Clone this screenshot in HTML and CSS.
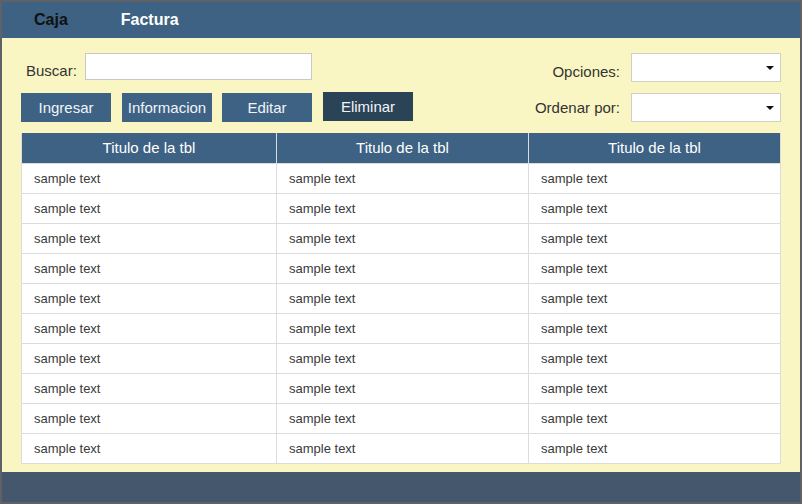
FILE: index.html
```html
<!DOCTYPE html>
<html lang="es">
<head>
<meta charset="utf-8">
<title>Caja</title>
<link rel="stylesheet" href="styles.css">
</head>
<body>
<div class="frame">
  <nav class="nav">
    <span class="nav-item active">Caja</span>
    <span class="nav-item">Factura</span>
  </nav>
  <main class="main">
    <div class="row row-top">
      <div class="group">
        <label class="label label-low">Buscar:</label>
        <div class="input"></div>
      </div>
      <div class="group">
        <label class="label label-low">Opciones:</label>
        <div class="select"><span class="caret"></span></div>
      </div>
    </div>
    <div class="row row-bottom">
      <div class="buttons">
        <button class="btn">Ingresar</button>
        <button class="btn">Informacion</button>
        <button class="btn">Editar</button>
        <button class="btn btn-active">Eliminar</button>
      </div>
      <div class="group">
        <label class="label">Ordenar por:</label>
        <div class="select"><span class="caret"></span></div>
      </div>
    </div>
    <table class="tbl">
      <colgroup><col class="c1"><col class="c2"><col></colgroup>
      <thead>
        <tr><th>Titulo de la tbl</th><th>Titulo de la tbl</th><th>Titulo de la tbl</th></tr>
      </thead>
      <tbody>
        <tr><td>sample text</td><td>sample text</td><td>sample text</td></tr>
        <tr><td>sample text</td><td>sample text</td><td>sample text</td></tr>
        <tr><td>sample text</td><td>sample text</td><td>sample text</td></tr>
        <tr><td>sample text</td><td>sample text</td><td>sample text</td></tr>
        <tr><td>sample text</td><td>sample text</td><td>sample text</td></tr>
        <tr><td>sample text</td><td>sample text</td><td>sample text</td></tr>
        <tr><td>sample text</td><td>sample text</td><td>sample text</td></tr>
        <tr><td>sample text</td><td>sample text</td><td>sample text</td></tr>
        <tr><td>sample text</td><td>sample text</td><td>sample text</td></tr>
        <tr><td>sample text</td><td>sample text</td><td>sample text</td></tr>
      </tbody>
    </table>
  </main>
  <footer class="footer"></footer>
</div>
</body>
</html>
```

FILE: styles.css
```css
* { box-sizing: border-box; }
html, body { margin: 0; padding: 0; }
body {
  font-family: "Liberation Sans", Arial, sans-serif;
  width: 802px;
  height: 504px;
  overflow: hidden;
}
.frame {
  width: 802px;
  height: 504px;
  border: 2px solid #5e6266;
  display: flex;
  flex-direction: column;
}
.nav {
  height: 36px;
  background: #3d6283;
  display: flex;
  align-items: center;
  padding-left: 32px;
  gap: 53px;
}
.nav-item {
  font-size: 16px;
  font-weight: bold;
  color: #ffffff;
}
.nav-item.active { color: #111111; }
.main {
  flex: 1;
  background: #faf6c3;
  padding: 15px 19px 0 19px;
}
.row {
  display: flex;
  justify-content: space-between;
  align-items: center;
  height: 29px;
}
.row-bottom { margin-top: 11px; }
.group {
  display: flex;
  align-items: center;
}
.row-top .group:first-child { padding-left: 5px; align-self: flex-start; }
.label {
  font-size: 15px;
  color: #333333;
  margin-right: 11px;
}
.label-low { margin-top: 7px; }
.row-top .group:first-child .label { margin-right: 8px; }
.input {
  width: 227px;
  height: 27px;
  background: #ffffff;
  border: 1px solid #c9c9c3;
}
.select {
  position: relative;
  width: 150px;
  height: 29px;
  background: #ffffff;
  border: 1px solid #cfcfc8;
}
.caret {
  position: absolute;
  right: 6px;
  top: 12px;
  width: 0;
  height: 0;
  border-left: 4px solid transparent;
  border-right: 4px solid transparent;
  border-top: 4px solid #111111;
}
.buttons {
  display: flex;
  gap: 11px;
  height: 29px;
}
.btn {
  width: 90px;
  height: 29px;
  border: 0;
  padding: 0;
  background: #3d6283;
  color: #f2f4f8;
  font-family: "Liberation Sans", Arial, sans-serif;
  font-size: 15px;
}
.btn:nth-child(3) { margin-left: -1px; }
.btn-active {
  background: #2a4357;
  margin-top: -1px;
}
.tbl {
  margin-top: 11px;
  width: 760px;
  border-collapse: collapse;
  table-layout: fixed;
}
.c1 { width: 255px; }
.c2 { width: 252px; }
.tbl th {
  height: 30px;
  background: #3d6283;
  color: #ffffff;
  font-weight: normal;
  font-size: 15px;
  text-align: center;
  border-left: 1px solid #dcdcdc;
  border-right: 1px solid #dcdcdc;
  padding: 0;
}
.tbl td {
  height: 30px;
  background: #ffffff;
  color: #3a3a3a;
  font-size: 13px;
  padding: 0 0 0 12px;
  border: 1px solid #dcdcdc;
}
.footer {
  height: 30px;
  background: #44576c;
}
```
